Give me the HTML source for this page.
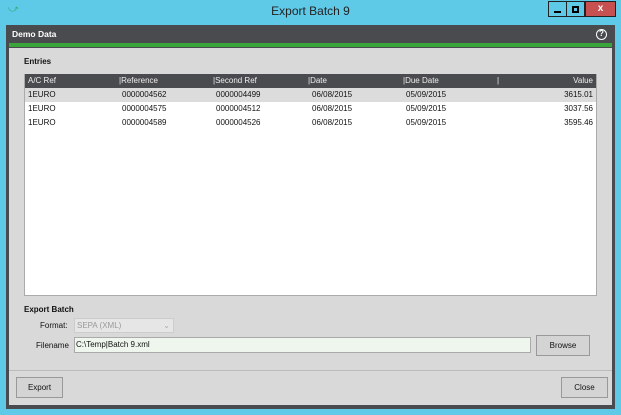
<!DOCTYPE html>
<html><head><style>
*{margin:0;padding:0;box-sizing:border-box}
body{width:621px;height:415px;background:#5fc9e8;font-family:"Liberation Sans",sans-serif;font-size:8px;position:relative;overflow:hidden;color:#111}
.abs{position:absolute}
.title{left:0;top:0;width:621px;height:24px;text-align:center;line-height:22px;font-size:12px;color:#222}
.frame{left:6px;top:25px;width:609px;height:384px;background:#4a4b4f}
.hdr{left:9px;top:26px;width:603px;height:16px;color:#fff;font-weight:bold;font-size:8.5px;line-height:16px;padding-left:3px}
.green{left:9px;top:43px;width:603px;height:4px;background:#3aa53a}
.content{left:9px;top:48px;width:603px;height:357px;background:#d9d9d9}
.tbl{left:24px;top:74px;width:573px;height:222px;background:#fff;border:1px solid #aaa}
.th{left:25px;top:74px;width:571px;height:13px;background:#4a4b4f;color:#eee}
.row{left:25px;width:571px;height:14px;line-height:14px}
.c{position:absolute;top:0}
.btn{background:#d4d4d4;border:1px solid #999;text-align:center;font-size:8px}
</style></head><body>
<div class="abs title">Export Batch 9</div>
<div class="abs" style="left:8px;top:4px;color:#3a7;font-size:10px">⤻</div>
<div class="abs" style="left:548px;top:1px;width:19px;height:16px;background:#5fc9e8;border:1px solid #222"><div style="margin:9px 5px 0;height:2px;background:#000;width:7px"></div></div>
<div class="abs" style="left:566px;top:1px;width:19px;height:16px;border:1px solid #222"><div style="margin:4px auto 0;width:7px;height:7px;border:2px solid #000"></div></div>
<div class="abs" style="left:585px;top:1px;width:31px;height:16px;background:#c75050;border:1px solid #222;color:#fff;font-weight:bold;text-align:center;line-height:14px;font-size:10px">x</div>
<div class="abs frame"></div>
<div class="abs hdr">Demo Data</div>
<div class="abs" style="left:596px;top:29px;width:11px;height:11px;border:1.5px solid #fff;border-radius:50%;color:#fff;font-size:8px;font-weight:bold;text-align:center;line-height:8px">?</div>
<div class="abs green"></div>
<div class="abs content"></div>
<div class="abs" style="left:24px;top:57px;font-weight:bold">Entries</div>
<div class="abs tbl"></div>
<div class="abs th row" style="line-height:13px">
<span class="c" style="left:3px">A/C Ref</span>
<span class="c" style="left:94px">|Reference</span>
<span class="c" style="left:188px">|Second Ref</span>
<span class="c" style="left:283px">|Date</span>
<span class="c" style="left:378px">|Due Date</span>
<span class="c" style="left:472px">|</span>
<span class="c" style="right:3px">Value</span></div>
<div class="abs row" style="top:88px;background:#dcdcdc"><span class="c" style="left:3px">1EURO</span><span class="c" style="left:97px">0000004562</span><span class="c" style="left:191px">0000004499</span><span class="c" style="left:287px">06/08/2015</span><span class="c" style="left:381px">05/09/2015</span><span class="c" style="right:3px">3615.01</span></div>
<div class="abs row" style="top:102px"><span class="c" style="left:3px">1EURO</span><span class="c" style="left:97px">0000004575</span><span class="c" style="left:191px">0000004512</span><span class="c" style="left:287px">06/08/2015</span><span class="c" style="left:381px">05/09/2015</span><span class="c" style="right:3px">3037.56</span></div>
<div class="abs row" style="top:116px"><span class="c" style="left:3px">1EURO</span><span class="c" style="left:97px">0000004589</span><span class="c" style="left:191px">0000004526</span><span class="c" style="left:287px">06/08/2015</span><span class="c" style="left:381px">05/09/2015</span><span class="c" style="right:3px">3595.46</span></div>
<div class="abs" style="left:24px;top:305px;font-weight:bold">Export Batch</div>
<div class="abs" style="left:40px;top:321px">Format:</div>
<div class="abs" style="left:74px;top:318px;width:100px;height:15px;background:#e6e6e6;border:1px solid #ccc;color:#999;line-height:13px;padding-left:2px">SEPA (XML)<span style="position:absolute;right:3px;color:#aaa">⌄</span></div>
<div class="abs" style="left:36px;top:341px">Filename</div>
<div class="abs" style="left:74px;top:337px;width:457px;height:16px;background:#eef6ee;border:1px solid #aaa;line-height:14px;padding-left:1px">C:\Temp|Batch 9.xml</div>
<div class="abs btn" style="left:536px;top:335px;width:54px;height:21px;line-height:19px">Browse</div>
<div class="abs" style="left:9px;top:370px;width:603px;height:1px;background:#bbb"></div>
<div class="abs btn" style="left:16px;top:377px;width:47px;height:21px;line-height:19px">Export</div>
<div class="abs btn" style="left:561px;top:377px;width:47px;height:21px;line-height:19px">Close</div>
</body></html>
